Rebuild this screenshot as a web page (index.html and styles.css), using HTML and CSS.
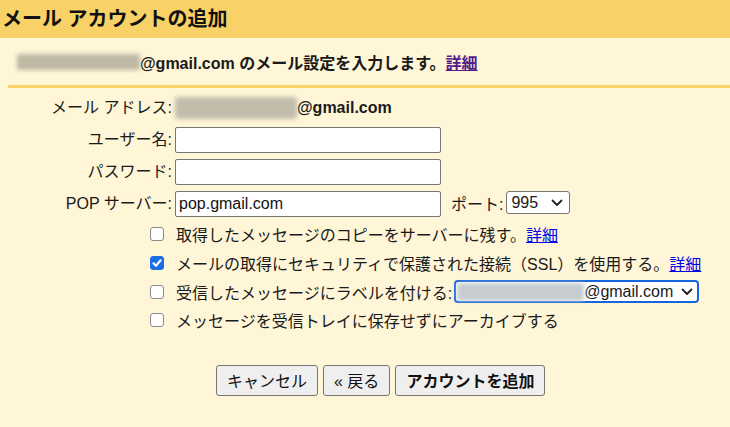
FILE: index.html
```html
<!DOCTYPE html>
<html lang="ja">
<head>
<meta charset="utf-8">
<title>メール アカウントの追加</title>
<link rel="stylesheet" href="styles.css">
</head>
<body>
<div class="header">メール アカウントの追加</div>
<div class="intro">
  <span class="blur blur-intro"></span><span class="strong">@gmail.com のメール設定を入力します。</span><a class="link visited" href="#">詳細</a>
</div>
<div class="sep"></div>
<div class="form">
  <div class="label">メール アドレス:</div>
  <div class="value"><span class="blur blur-addr"></span><span class="strong">@gmail.com</span></div>
  <div class="label">ユーザー名:</div>
  <div class="value"><input class="text" type="text"></div>
  <div class="label">パスワード:</div>
  <div class="value"><input class="text" type="password"></div>
  <div class="label">POP サーバー:</div>
  <div class="value">
    <input class="text" type="text" value="pop.gmail.com">
    <span class="port-label">ポート:</span>
    <div class="select port"><span>995</span><svg class="chev" width="12" height="8" viewBox="0 0 12 8"><path d="M1.5 1.5 L6 6 L10.5 1.5" fill="none" stroke="#222" stroke-width="1.8" stroke-linecap="round" stroke-linejoin="round"/></svg></div>
  </div>
</div>
<div class="checks">
  <div class="check-row"><span class="cb"></span><span>取得したメッセージのコピーをサーバーに残す。<a class="link" href="#">詳細</a></span></div>
  <div class="check-row"><span class="cb checked"><svg width="14" height="14" viewBox="0 0 14 14"><path d="M3.5 7.3 L6 9.8 L10.6 4.3" fill="none" stroke="#fff" stroke-width="2.2" stroke-linecap="round" stroke-linejoin="round"/></svg></span><span>メールの取得にセキュリティで保護された接続（SSL）を使用する。<a class="link" href="#">詳細</a></span></div>
  <div class="check-row"><span class="cb"></span><span>受信したメッセージにラベルを付ける:</span>
    <div class="select label-select"><span class="blur blur-label"></span><span>@gmail.com</span><svg class="chev end" width="12" height="8" viewBox="0 0 12 8"><path d="M1.5 1.5 L6 6 L10.5 1.5" fill="none" stroke="#222" stroke-width="1.8" stroke-linecap="round" stroke-linejoin="round"/></svg></div>
  </div>
  <div class="check-row"><span class="cb"></span><span>メッセージを受信トレイに保存せずにアーカイブする</span></div>
</div>
<div class="buttons">
  <button class="btn">キャンセル</button>
  <button class="btn">« 戻る</button>
  <button class="btn bold">アカウントを追加</button>
</div>
</body>
</html>
```
FILE: styles.css
```css
html, body {
  margin: 0;
  padding: 0;
}
body {
  background: #fff5d7;
  font-family: "Liberation Sans", "Noto Sans CJK JP", sans-serif;
  font-size: 16px;
  color: #1a1a1a;
  width: 730px;
  height: 427px;
  overflow: hidden;
}
.header {
  background: #f9d267;
  height: 38px;
  line-height: 38px;
  padding-left: 2px;
  font-size: 20px;
  font-weight: bold;
  color: #111;
}
.intro {
  display: flex;
  align-items: center;
  height: 47px;
  padding-left: 17px;
}
.strong {
  font-weight: bold;
}
.blur {
  display: inline-block;
  border-radius: 2px;
  filter: blur(2px);
}
.blur-intro {
  width: 123px;
  height: 16px;
  background: #beb8a4;
}
.blur-addr {
  width: 122px;
  height: 22px;
  background: #c2bcaa;
}
.blur-label {
  width: 127px;
  height: 18px;
  background: #c6ccd0;
  margin-left: 1px;
}
.link {
  color: #0000ee;
  text-decoration: underline;
}
.link.visited {
  color: #551a8b;
  font-weight: bold;
}
.sep {
  height: 3px;
  background: #f9d267;
  margin-left: 8px;
}
.form {
  display: grid;
  grid-template-columns: 172px 1fr;
  column-gap: 3px;
  row-gap: 6px;
  margin-top: 7px;
}
.label {
  text-align: right;
  height: 26px;
  line-height: 26px;
}
.value {
  display: flex;
  align-items: center;
  height: 26px;
}
.text {
  box-sizing: border-box;
  width: 266px;
  height: 26px;
  border: 1px solid #767676;
  border-radius: 2px;
  background: #fff;
  font-family: "Liberation Sans", "Noto Sans CJK JP", sans-serif;
  font-size: 16px;
  padding: 0 3px;
  margin: 0;
  color: #111;
}
.port-label {
  margin-left: 10px;
  margin-right: 3px;
  margin-top: -3px;
}
.select {
  box-sizing: border-box;
  display: flex;
  align-items: center;
  background: #fff;
  font-size: 16px;
}
.port {
  width: 64px;
  height: 23px;
  border: 1px solid #767676;
  border-radius: 3px;
  padding-left: 4px;
  margin-top: -3px;
  justify-content: space-between;
  padding-right: 6px;
}
.chev {
  flex: none;
}
.chev.end {
  margin-left: auto;
}
.checks {
  margin-top: 3px;
  padding-left: 150px;
  display: flex;
  flex-direction: column;
}
.check-row {
  display: flex;
  align-items: center;
  height: 28.7px;
}
.cb {
  box-sizing: border-box;
  width: 14px;
  height: 14px;
  border: 1px solid #8a8a8a;
  border-radius: 3px;
  background: #fff;
  margin-right: 12px;
  flex: none;
  display: flex;
}
.cb.checked {
  background: #1a6ee8;
  border-color: #1a6ee8;
}
.cb.checked svg {
  margin: -1px;
}
.label-select {
  height: 23px;
  width: 245px;
  border: 2px solid #1667dd;
  border-radius: 4px;
  margin-left: 2px;
  padding-right: 4px;
}
.buttons {
  display: flex;
  gap: 5px;
  margin-top: 30px;
  padding-left: 216px;
}
.btn {
  box-sizing: border-box;
  height: 31px;
  padding: 0 10px;
  background: #efefef;
  border: 1px solid #767676;
  border-radius: 3px;
  font-family: "Liberation Sans", "Noto Sans CJK JP", sans-serif;
  font-size: 16px;
  color: #111;
}
.btn.bold {
  font-weight: bold;
}
```
